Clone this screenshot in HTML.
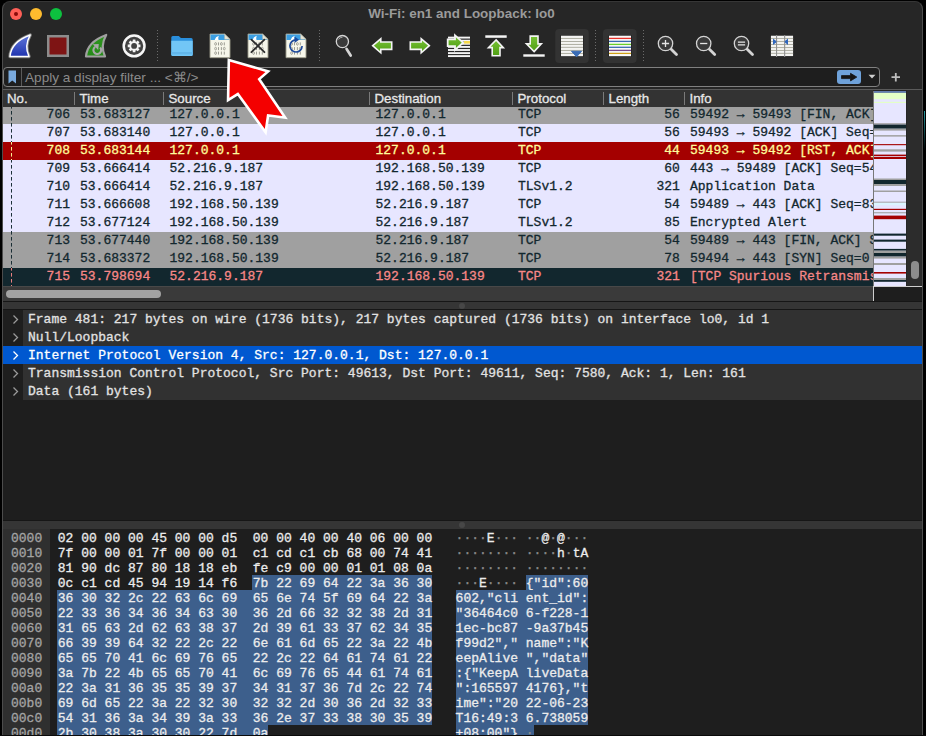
<!DOCTYPE html>
<html><head><meta charset="utf-8">
<style>
html,body{margin:0;padding:0;width:926px;height:736px;overflow:hidden;background:#000;position:relative;}
*{box-sizing:border-box;}
.a{position:absolute;}
.sans{font-family:"Liberation Sans",sans-serif;}
.mono{font-family:"Liberation Mono",monospace;}
.row{position:absolute;left:3px;width:870px;height:18px;font-family:"Liberation Mono",monospace;font-size:13px;line-height:18px;white-space:pre;overflow:hidden;-webkit-text-stroke:0.3px currentColor;}
.row span{position:absolute;top:0;}
.hdr{position:absolute;top:0;font-family:"Liberation Sans",sans-serif;font-size:13.3px;color:#e8e8e8;line-height:17px;white-space:pre;-webkit-text-stroke:0.3px currentColor;}
.hsep{position:absolute;top:92px;width:1px;height:13px;background:#7a7a7a;}
.drow{position:absolute;left:3px;width:919px;height:18px;font-family:"Liberation Mono",monospace;font-size:13px;line-height:18px;white-space:pre;color:#e2e2e2;-webkit-text-stroke:0.3px currentColor;}
.hx{position:absolute;font-family:"Liberation Mono",monospace;font-size:13px;line-height:15px;white-space:pre;color:#ececec;-webkit-text-stroke:0.3px currentColor;}
.sep{position:absolute;top:30px;width:0;height:31px;border-left:1px dotted #6a6a6a;}
</style></head><body>

<div class="a" style="left:2px;top:1px;width:921px;height:760px;background:#262626;border-radius:8px 8px 0 0;border:1px solid #4c4c4c;border-top-color:#363636;border-bottom:none;"></div>
<div class="a sans" style="left:-1.5px;top:6px;width:926px;text-align:center;font-weight:bold;font-size:13.45px;color:#9b9b9b;line-height:16px;">Wi-Fi: en1 and Loopback: lo0</div>
<div class="a" style="left:10px;top:8px;width:12px;height:12px;border-radius:50%;background:#fe5f57;"></div>
<div class="a" style="left:14px;top:12px;width:4px;height:4px;border-radius:50%;background:#8a0a0a;"></div>
<div class="a" style="left:30px;top:8px;width:12px;height:12px;border-radius:50%;background:#febc2e;"></div>
<div class="a" style="left:50px;top:8px;width:12px;height:12px;border-radius:50%;background:#0dc13f;"></div>
<svg class="a" style="left:0;top:0" width="926" height="70" viewBox="0 0 926 70"><defs><linearGradient id="gb" x1="0" y1="0" x2="0" y2="1"><stop offset="0" stop-color="#6077db"/><stop offset="1" stop-color="#1f33ae"/></linearGradient><linearGradient id="gg" x1="0" y1="0" x2="0" y2="1"><stop offset="0" stop-color="#2f951f"/><stop offset="1" stop-color="#248a18"/></linearGradient><linearGradient id="ga" x1="0" y1="0" x2="0" y2="1"><stop offset="0" stop-color="#78c235"/><stop offset="1" stop-color="#4f9e14"/></linearGradient></defs><path d="M10,56.5 Q11,42 30.2,35 Q24,46 29,56.5 Z" fill="none" stroke="#7c7c7c" stroke-width="3.4" stroke-linejoin="round"/><path d="M10,56.5 Q11,42 30.2,35 Q24,46 29,56.5 Z" fill="url(#gb)" stroke="#ffffff" stroke-width="1.5" stroke-linejoin="round"/><rect x="47" y="35" width="22" height="22" fill="#8c8c8c"/><rect x="49.5" y="37.5" width="17" height="17" fill="#7e1414"/><path d="M86,56.5 Q87,42 106.2,35 Q100,46 105,56.5 Z" fill="url(#gg)" stroke="#a0a0a0" stroke-width="2.2" stroke-linejoin="round"/><path d="M95.2,46.8 A3.9,3.9 0 1 0 100.2,47.5" fill="none" stroke="#a8a8a8" stroke-width="2.1"/><path d="M92.8,44.2 L98.8,44 L98.2,50 Z" fill="#a8a8a8"/><circle cx="134.1" cy="45.9" r="10.4" fill="#424242" stroke="#f6f6f6" stroke-width="2.5"/><path d="M140.47,44.61 L140.47,47.19 L138.69,47.32 L138.35,48.14 L139.52,49.49 L137.69,51.32 L136.34,50.15 L135.52,50.49 L135.39,52.27 L132.81,52.27 L132.68,50.49 L131.86,50.15 L130.51,51.32 L128.68,49.49 L129.85,48.14 L129.51,47.32 L127.73,47.19 L127.73,44.61 L129.51,44.48 L129.85,43.66 L128.68,42.31 L130.51,40.48 L131.86,41.65 L132.68,41.31 L132.81,39.53 L135.39,39.53 L135.52,41.31 L136.34,41.65 L137.69,40.48 L139.52,42.31 L138.35,43.66 L138.69,44.48 Z" fill="#f4f4f4"/><circle cx="134.1" cy="45.9" r="2.9" fill="#424242"/><path d="M171.3,37.4 Q171.3,35.9 172.8,35.9 L178.8,35.9 L180.9,38 L191.2,38 Q192.7,38 192.7,39.5 L192.7,54.4 Q192.7,55.9 191.2,55.9 L172.8,55.9 Q171.3,55.9 171.3,54.4 Z" fill="#2a8fdc"/><path d="M171.3,40.8 L192.7,40.8 L192.7,54.4 Q192.7,55.9 191.2,55.9 L172.8,55.9 Q171.3,55.9 171.3,54.4 Z" fill="#72c6f6"/><rect x="171.3" y="52" width="21.4" height="2.4" fill="#62b6ea"/><path d="M210,34 L224.6,34 L230,39.3 L230,57.7 L210,57.7 Z" fill="#f6f6ea" stroke="#9a9888" stroke-width="0.9"/><path d="M210.5,34.5 L224.4,34.5 L229.5,39.5 L229.5,39.9 L210.5,39.9 Z" fill="#3a9ee2"/><path d="M214.6,39.9 Q215.5,36.8 218.8,35.8 Q217.8,38 218.6,39.9 Z" fill="#ffffff"/><path d="M224.6,34.2 L224.6,39.3 L229.8,39.3 Z" fill="#e8e6d6" stroke="#b8b6a4" stroke-width="0.5"/><ellipse cx="215.60" cy="43.9" rx="0.9" ry="1.35" fill="none" stroke="#85857c" stroke-width="0.7"/><line x1="218.50" y1="42.4" x2="218.50" y2="45.4" stroke="#85857c" stroke-width="0.8"/><ellipse cx="221.40" cy="43.9" rx="0.9" ry="1.35" fill="none" stroke="#85857c" stroke-width="0.7"/><line x1="224.30" y1="42.4" x2="224.30" y2="45.4" stroke="#85857c" stroke-width="0.8"/><ellipse cx="215.60" cy="48.6" rx="0.9" ry="1.35" fill="none" stroke="#85857c" stroke-width="0.7"/><line x1="218.50" y1="47.1" x2="218.50" y2="50.1" stroke="#85857c" stroke-width="0.8"/><line x1="221.40" y1="47.1" x2="221.40" y2="50.1" stroke="#85857c" stroke-width="0.8"/><ellipse cx="224.30" cy="48.6" rx="0.9" ry="1.35" fill="none" stroke="#85857c" stroke-width="0.7"/><ellipse cx="215.60" cy="53.1" rx="0.9" ry="1.35" fill="none" stroke="#85857c" stroke-width="0.7"/><line x1="218.50" y1="51.6" x2="218.50" y2="54.6" stroke="#85857c" stroke-width="0.8"/><line x1="221.40" y1="51.6" x2="221.40" y2="54.6" stroke="#85857c" stroke-width="0.8"/><line x1="224.30" y1="51.6" x2="224.30" y2="54.6" stroke="#85857c" stroke-width="0.8"/><path d="M248,34 L262.6,34 L268,39.3 L268,57.7 L248,57.7 Z" fill="#f6f6ea" stroke="#9a9888" stroke-width="0.9"/><path d="M248.5,34.5 L262.4,34.5 L267.5,39.5 L267.5,39.9 L248.5,39.9 Z" fill="#3a9ee2"/><path d="M252.6,39.9 Q253.5,36.8 256.8,35.8 Q255.8,38 256.6,39.9 Z" fill="#ffffff"/><path d="M262.6,34.2 L262.6,39.3 L267.8,39.3 Z" fill="#e8e6d6" stroke="#b8b6a4" stroke-width="0.5"/><ellipse cx="253.60" cy="43.9" rx="0.9" ry="1.35" fill="none" stroke="#85857c" stroke-width="0.7"/><line x1="256.50" y1="42.4" x2="256.50" y2="45.4" stroke="#85857c" stroke-width="0.8"/><ellipse cx="259.40" cy="43.9" rx="0.9" ry="1.35" fill="none" stroke="#85857c" stroke-width="0.7"/><line x1="262.30" y1="42.4" x2="262.30" y2="45.4" stroke="#85857c" stroke-width="0.8"/><ellipse cx="253.60" cy="48.6" rx="0.9" ry="1.35" fill="none" stroke="#85857c" stroke-width="0.7"/><line x1="256.50" y1="47.1" x2="256.50" y2="50.1" stroke="#85857c" stroke-width="0.8"/><line x1="259.40" y1="47.1" x2="259.40" y2="50.1" stroke="#85857c" stroke-width="0.8"/><ellipse cx="262.30" cy="48.6" rx="0.9" ry="1.35" fill="none" stroke="#85857c" stroke-width="0.7"/><ellipse cx="253.60" cy="53.1" rx="0.9" ry="1.35" fill="none" stroke="#85857c" stroke-width="0.7"/><line x1="256.50" y1="51.6" x2="256.50" y2="54.6" stroke="#85857c" stroke-width="0.8"/><line x1="259.40" y1="51.6" x2="259.40" y2="54.6" stroke="#85857c" stroke-width="0.8"/><line x1="262.30" y1="51.6" x2="262.30" y2="54.6" stroke="#85857c" stroke-width="0.8"/><path d="M286,34 L300.6,34 L306,39.3 L306,57.7 L286,57.7 Z" fill="#f6f6ea" stroke="#9a9888" stroke-width="0.9"/><path d="M286.5,34.5 L300.4,34.5 L305.5,39.5 L305.5,39.9 L286.5,39.9 Z" fill="#3a9ee2"/><path d="M290.6,39.9 Q291.5,36.8 294.8,35.8 Q293.8,38 294.6,39.9 Z" fill="#ffffff"/><path d="M300.6,34.2 L300.6,39.3 L305.8,39.3 Z" fill="#e8e6d6" stroke="#b8b6a4" stroke-width="0.5"/><ellipse cx="291.60" cy="43.9" rx="0.9" ry="1.35" fill="none" stroke="#85857c" stroke-width="0.7"/><line x1="294.50" y1="42.4" x2="294.50" y2="45.4" stroke="#85857c" stroke-width="0.8"/><ellipse cx="297.40" cy="43.9" rx="0.9" ry="1.35" fill="none" stroke="#85857c" stroke-width="0.7"/><line x1="300.30" y1="42.4" x2="300.30" y2="45.4" stroke="#85857c" stroke-width="0.8"/><ellipse cx="291.60" cy="48.6" rx="0.9" ry="1.35" fill="none" stroke="#85857c" stroke-width="0.7"/><line x1="294.50" y1="47.1" x2="294.50" y2="50.1" stroke="#85857c" stroke-width="0.8"/><line x1="297.40" y1="47.1" x2="297.40" y2="50.1" stroke="#85857c" stroke-width="0.8"/><ellipse cx="300.30" cy="48.6" rx="0.9" ry="1.35" fill="none" stroke="#85857c" stroke-width="0.7"/><ellipse cx="291.60" cy="53.1" rx="0.9" ry="1.35" fill="none" stroke="#85857c" stroke-width="0.7"/><line x1="294.50" y1="51.6" x2="294.50" y2="54.6" stroke="#85857c" stroke-width="0.8"/><line x1="297.40" y1="51.6" x2="297.40" y2="54.6" stroke="#85857c" stroke-width="0.8"/><line x1="300.30" y1="51.6" x2="300.30" y2="54.6" stroke="#85857c" stroke-width="0.8"/><path d="M251.4,39.6 L264.4,52.2 M264.4,39.6 L251.4,52.2" stroke="#2c2c2c" stroke-width="1.8" stroke-linecap="round"/><path d="M296,39.8 A6.1,6.1 0 1 0 302.1,46" fill="none" stroke="#1e4a9c" stroke-width="1.7"/><path d="M294.6,36.6 L299,39.8 L294.6,43 Z" fill="#1e4a9c"/><line x1="157.5" y1="30" x2="157.5" y2="62" stroke="#6a6a6a" stroke-width="1" stroke-dasharray="1,2"/><line x1="319.5" y1="30" x2="319.5" y2="62" stroke="#6a6a6a" stroke-width="1" stroke-dasharray="1,2"/><line x1="595.5" y1="30" x2="595.5" y2="62" stroke="#6a6a6a" stroke-width="1" stroke-dasharray="1,2"/><line x1="643.5" y1="30" x2="643.5" y2="62" stroke="#6a6a6a" stroke-width="1" stroke-dasharray="1,2"/><line x1="346.6" y1="49" x2="350.7" y2="55.5" stroke="#d4d4d4" stroke-width="2.7" stroke-linecap="round"/><circle cx="342.4" cy="41.6" r="6.1" fill="#3a3a3a" stroke="#d4d4d4" stroke-width="1.3"/><path d="M338.5,39.5 A4.3,4.3 0 0 1 342.5,37.3" fill="none" stroke="#bdbdbd" stroke-width="0.8"/><path d="M372.7,45.7 L380.8,38.8 L380.8,42 L391.7,42 L391.7,49.4 L380.8,49.4 L380.8,52.8 Z" fill="url(#ga)" stroke="#f4f4f4" stroke-width="1.6" stroke-linejoin="miter"/><path d="M429.3,45.7 L421.2,38.8 L421.2,42 L410.3,42 L410.3,49.4 L421.2,49.4 L421.2,52.8 Z" fill="url(#ga)" stroke="#f4f4f4" stroke-width="1.6" stroke-linejoin="miter"/><rect x="448" y="36.65" width="22" height="1.9" fill="#f4f4f4"/><rect x="448" y="39.75" width="22" height="1.9" fill="#f4f4f4"/><rect x="448" y="42.849999999999994" width="22" height="1.9" fill="#f4f4f4"/><rect x="448" y="45.949999999999996" width="22" height="1.9" fill="#f4f4f4"/><rect x="448" y="49.05" width="22" height="1.9" fill="#f4f4f4"/><rect x="448" y="52.15" width="22" height="1.9" fill="#f4f4f4"/><rect x="448" y="55.15" width="22" height="1.9" fill="#f4f4f4"/><rect x="464" y="41" width="6" height="2.6" fill="#f6d84a"/><path d="M463,42.7 L455,35.4 L455,39.4 L447.7,39.4 L447.7,46.1 L455,46.1 L455,50 Z" fill="url(#ga)" stroke="#f4f4f4" stroke-width="1.8" stroke-linejoin="miter"/><rect x="485.3" y="35.3" width="21.4" height="2.5" fill="#f4f4f4"/><path d="M496.1,39.9 L503.3,47.6 L500,47.6 L500,55.7 L492.2,55.7 L492.2,47.6 L488.5,47.6 Z" fill="url(#ga)" stroke="#f4f4f4" stroke-width="1.6" stroke-linejoin="miter"/><rect x="523.3" y="54.3" width="21.4" height="2.4" fill="#f4f4f4"/><path d="M534.1,51.6 L541.3,43.9 L538,43.9 L538,36.1 L530.2,36.1 L530.2,43.9 L526.5,43.9 Z" fill="url(#ga)" stroke="#f4f4f4" stroke-width="1.6" stroke-linejoin="miter"/><rect x="555.2" y="29" width="33.6" height="33.9" rx="4" fill="#333333"/><rect x="560.5" y="35.2" width="23" height="21.5" fill="#1c1c1c"/><rect x="561" y="35.7" width="22" height="20.5" fill="#f4f4f2"/><rect x="561" y="37.949999999999996" width="22" height="0.9" fill="#a6a69a"/><rect x="561" y="41.05" width="22" height="0.9" fill="#a6a69a"/><rect x="561" y="43.949999999999996" width="22" height="0.9" fill="#a6a69a"/><rect x="561" y="46.849999999999994" width="22" height="0.9" fill="#a6a69a"/><rect x="561" y="49.949999999999996" width="22" height="0.9" fill="#a6a69a"/><rect x="561" y="52.949999999999996" width="22" height="0.9" fill="#a6a69a"/><path d="M571.5,51.3 L581.5,51.3 L576.6,56.8 Z" fill="#3a6cb4" stroke="#3a6cb4" stroke-width="1" stroke-linejoin="round"/><rect x="603" y="29" width="33.6" height="33.9" rx="4" fill="#333333"/><rect x="608.5" y="35.2" width="23" height="21.5" fill="#1c1c1c"/><rect x="609" y="35.7" width="22" height="20.5" fill="#fafafa"/><rect x="609" y="37.75" width="22" height="1.3" fill="#e8312a"/><rect x="609" y="40.75" width="22" height="1.3" fill="#3a6ab0"/><rect x="609" y="43.75" width="22" height="1.3" fill="#6ad02a"/><rect x="609" y="46.65" width="22" height="1.3" fill="#3a6ab0"/><rect x="609" y="49.75" width="22" height="1.3" fill="#7a4a8a"/><rect x="609" y="52.75" width="22" height="1.3" fill="#d0a018"/><line x1="671.2" y1="49.2" x2="676.5" y2="54.5" stroke="#d4d4d4" stroke-width="2.8" stroke-linecap="round"/><circle cx="665.5" cy="43.5" r="7.2" fill="#3a3a3a" stroke="#d4d4d4" stroke-width="1.3"/><path d="M661.9,43.5 L669.1,43.5 M665.5,39.9 L665.5,47.1" stroke="#e6e6e6" stroke-width="1.3"/><line x1="709.4000000000001" y1="49.2" x2="714.7" y2="54.5" stroke="#d4d4d4" stroke-width="2.8" stroke-linecap="round"/><circle cx="703.7" cy="43.5" r="7.2" fill="#3a3a3a" stroke="#d4d4d4" stroke-width="1.3"/><path d="M700.1,43.5 L707.3000000000001,43.5" stroke="#e6e6e6" stroke-width="1.3"/><line x1="747.2" y1="49.2" x2="752.5" y2="54.5" stroke="#d4d4d4" stroke-width="2.8" stroke-linecap="round"/><circle cx="741.5" cy="43.5" r="7.2" fill="#3a3a3a" stroke="#d4d4d4" stroke-width="1.3"/><path d="M737.9,42.1 L745.1,42.1 M737.9,44.9 L745.1,44.9" stroke="#e6e6e6" stroke-width="1.2"/><rect x="770.4" y="35.2" width="23.2" height="21.4" fill="#1c1c1c"/><rect x="770.9" y="35.7" width="22.2" height="20.4" fill="#f4f4f2"/><rect x="770.9" y="37.949999999999996" width="22.2" height="0.9" fill="#a6a69a"/><rect x="770.9" y="40.949999999999996" width="22.2" height="0.9" fill="#a6a69a"/><rect x="770.9" y="44.05" width="22.2" height="0.9" fill="#a6a69a"/><rect x="770.9" y="47.15" width="22.2" height="0.9" fill="#a6a69a"/><rect x="770.9" y="49.949999999999996" width="22.2" height="0.9" fill="#a6a69a"/><rect x="770.9" y="52.849999999999994" width="22.2" height="0.9" fill="#a6a69a"/><rect x="776" y="35" width="1.1" height="22" fill="#909090"/><rect x="784.1" y="35" width="1.1" height="22" fill="#909090"/><path d="M773,38.5 Q776.5,41 776.5,41.7 Q776.5,42.4 773,45 Z M788,38.5 Q784.6,41 784.6,41.7 Q784.6,42.4 788,45 Z" fill="#2f66bc"/></svg>
<div class="a" style="left:3px;top:67px;width:877px;height:20px;border:1px solid #808080;border-radius:4px;background:#1e1e1e;"></div>
<div class="a" style="left:21px;top:68px;width:1px;height:18px;background:#5a5a5a;"></div>
<svg class="a" style="left:0;top:60px" width="30" height="30"><path d="M8.5,10.5 L16,10.5 L16,23.5 L12.25,20.5 L8.5,23.5 Z" fill="#79a9dc"/></svg>
<div class="a sans" style="left:25px;top:69px;font-size:13.6px;line-height:17px;color:#8b8b8b;white-space:pre;">Apply a display filter ... &lt;⌘/&gt;</div>
<div class="a" style="left:837px;top:70px;width:24px;height:14px;background:#6fa2da;border-radius:3px;"></div>
<svg class="a" style="left:830px;top:60px" width="96" height="30"><path d="M11.5,15.6 L20.5,15.6 L20.5,13.3 L26.8,17.1 L20.5,20.9 L20.5,18.6 L11.5,18.6 Z" fill="#151515" stroke="#151515" stroke-width="0.8" stroke-linejoin="round"/><path d="M38.5,14.8 L45.5,14.8 L42,18.6 Z" fill="#cfcfcf"/><path d="M65.8,13 L65.8,21.5 M61.5,17.2 L70,17.2" stroke="#bdbdbd" stroke-width="1.8"/></svg>
<div class="a" style="left:3px;top:89px;width:919px;height:1px;background:#5a5a5a;"></div>
<div class="a" style="left:3px;top:90px;width:870px;height:17px;background:#333333;"></div>
<div class="hdr" style="left:7px;top:90px;">No.</div>
<div class="hdr" style="left:79.5px;top:90px;">Time</div>
<div class="hdr" style="left:168.5px;top:90px;">Source</div>
<div class="hdr" style="left:374.5px;top:90px;">Destination</div>
<div class="hdr" style="left:517.5px;top:90px;">Protocol</div>
<div class="hdr" style="left:608.5px;top:90px;">Length</div>
<div class="hdr" style="left:689.5px;top:90px;">Info</div>
<div class="hsep" style="left:74px;"></div>
<div class="hsep" style="left:163px;"></div>
<div class="hsep" style="left:369px;"></div>
<div class="hsep" style="left:512px;"></div>
<div class="hsep" style="left:603px;"></div>
<div class="hsep" style="left:684px;"></div>
<div class="a" style="left:3px;top:107px;width:870px;height:179px;overflow:hidden;">
<div class="row" style="left:0;top:-1px;background:#a0a0a0;color:#12272e;">
<span style="left:43.6px;width:23.4px;text-align:right;">706</span>
<span style="left:77px;">53.683127</span>
<span style="left:166.5px;">127.0.0.1</span>
<span style="left:372.5px;">127.0.0.1</span>
<span style="left:515px;">TCP</span>
<span style="left:661.2px;">56</span>
<span style="left:687px;">59492 → 59493 [FIN, ACK] Seq=1 Ack=1 Win=6371</span>
<svg class="a" style="left:8px;top:0" width="1" height="18"><line x1="0.5" y1="-1" x2="0.5" y2="18" stroke="#12272e" stroke-opacity="0.95" stroke-dasharray="3.6,2.4"/></svg>
</div>
<div class="row" style="left:0;top:17px;background:#e7e6ff;color:#12272e;">
<span style="left:43.6px;width:23.4px;text-align:right;">707</span>
<span style="left:77px;">53.683140</span>
<span style="left:166.5px;">127.0.0.1</span>
<span style="left:372.5px;">127.0.0.1</span>
<span style="left:515px;">TCP</span>
<span style="left:661.2px;">56</span>
<span style="left:687px;">59493 → 59492 [ACK] Seq=1 Ack=2 Win=6371</span>
<svg class="a" style="left:8px;top:0" width="1" height="18"><line x1="0.5" y1="-1" x2="0.5" y2="18" stroke="#12272e" stroke-opacity="0.95" stroke-dasharray="3.6,2.4"/></svg>
</div>
<div class="row" style="left:0;top:35px;background:#a40000;color:#fffc9c;">
<span style="left:43.6px;width:23.4px;text-align:right;">708</span>
<span style="left:77px;">53.683144</span>
<span style="left:166.5px;">127.0.0.1</span>
<span style="left:372.5px;">127.0.0.1</span>
<span style="left:515px;">TCP</span>
<span style="left:661.2px;">44</span>
<span style="left:687px;">59493 → 59492 [RST, ACK] Seq=1 Ack=2</span>
<svg class="a" style="left:8px;top:0" width="1" height="18"><line x1="0.5" y1="-1" x2="0.5" y2="18" stroke="#fffc9c" stroke-opacity="0.95" stroke-dasharray="3.6,2.4"/></svg>
</div>
<div class="row" style="left:0;top:53px;background:#e7e6ff;color:#12272e;">
<span style="left:43.6px;width:23.4px;text-align:right;">709</span>
<span style="left:77px;">53.666414</span>
<span style="left:166.5px;">52.216.9.187</span>
<span style="left:372.5px;">192.168.50.139</span>
<span style="left:515px;">TCP</span>
<span style="left:661.2px;">60</span>
<span style="left:687px;">443 → 59489 [ACK] Seq=5432 Ack=8</span>
<svg class="a" style="left:8px;top:0" width="1" height="18"><line x1="0.5" y1="-1" x2="0.5" y2="18" stroke="#12272e" stroke-opacity="0.95" stroke-dasharray="3.6,2.4"/></svg>
</div>
<div class="row" style="left:0;top:71px;background:#e7e6ff;color:#12272e;">
<span style="left:43.6px;width:23.4px;text-align:right;">710</span>
<span style="left:77px;">53.666414</span>
<span style="left:166.5px;">52.216.9.187</span>
<span style="left:372.5px;">192.168.50.139</span>
<span style="left:515px;">TLSv1.2</span>
<span style="left:653.4px;">321</span>
<span style="left:687px;">Application Data</span>
<svg class="a" style="left:8px;top:0" width="1" height="18"><line x1="0.5" y1="-1" x2="0.5" y2="18" stroke="#12272e" stroke-opacity="0.95" stroke-dasharray="3.6,2.4"/></svg>
</div>
<div class="row" style="left:0;top:89px;background:#e7e6ff;color:#12272e;">
<span style="left:43.6px;width:23.4px;text-align:right;">711</span>
<span style="left:77px;">53.666608</span>
<span style="left:166.5px;">192.168.50.139</span>
<span style="left:372.5px;">52.216.9.187</span>
<span style="left:515px;">TCP</span>
<span style="left:661.2px;">54</span>
<span style="left:687px;">59489 → 443 [ACK] Seq=83 Ack=6</span>
<svg class="a" style="left:8px;top:0" width="1" height="18"><line x1="0.5" y1="-1" x2="0.5" y2="18" stroke="#12272e" stroke-opacity="0.95" stroke-dasharray="3.6,2.4"/></svg>
</div>
<div class="row" style="left:0;top:107px;background:#e7e6ff;color:#12272e;">
<span style="left:43.6px;width:23.4px;text-align:right;">712</span>
<span style="left:77px;">53.677124</span>
<span style="left:166.5px;">192.168.50.139</span>
<span style="left:372.5px;">52.216.9.187</span>
<span style="left:515px;">TLSv1.2</span>
<span style="left:661.2px;">85</span>
<span style="left:687px;">Encrypted Alert</span>
<svg class="a" style="left:8px;top:0" width="1" height="18"><line x1="0.5" y1="-1" x2="0.5" y2="18" stroke="#12272e" stroke-opacity="0.95" stroke-dasharray="3.6,2.4"/></svg>
</div>
<div class="row" style="left:0;top:125px;background:#a0a0a0;color:#12272e;">
<span style="left:43.6px;width:23.4px;text-align:right;">713</span>
<span style="left:77px;">53.677440</span>
<span style="left:166.5px;">192.168.50.139</span>
<span style="left:372.5px;">52.216.9.187</span>
<span style="left:515px;">TCP</span>
<span style="left:661.2px;">54</span>
<span style="left:687px;">59489 → 443 [FIN, ACK] Seq=114 Ack=6</span>
<svg class="a" style="left:8px;top:0" width="1" height="18"><line x1="0.5" y1="-1" x2="0.5" y2="18" stroke="#12272e" stroke-opacity="0.95" stroke-dasharray="3.6,2.4"/></svg>
</div>
<div class="row" style="left:0;top:143px;background:#a0a0a0;color:#12272e;">
<span style="left:43.6px;width:23.4px;text-align:right;">714</span>
<span style="left:77px;">53.683372</span>
<span style="left:166.5px;">192.168.50.139</span>
<span style="left:372.5px;">52.216.9.187</span>
<span style="left:515px;">TCP</span>
<span style="left:661.2px;">78</span>
<span style="left:687px;">59494 → 443 [SYN] Seq=0 Win=65535</span>
<svg class="a" style="left:8px;top:0" width="1" height="18"><line x1="0.5" y1="-1" x2="0.5" y2="18" stroke="#12272e" stroke-opacity="0.95" stroke-dasharray="3.6,2.4"/></svg>
</div>
<div class="row" style="left:0;top:161px;background:#12272e;color:#f78787;">
<span style="left:43.6px;width:23.4px;text-align:right;">715</span>
<span style="left:77px;">53.798694</span>
<span style="left:166.5px;">52.216.9.187</span>
<span style="left:372.5px;">192.168.50.139</span>
<span style="left:515px;">TCP</span>
<span style="left:653.4px;">321</span>
<span style="left:687px;">[TCP Spurious Retransmission]</span>
<svg class="a" style="left:8px;top:0" width="1" height="18"><line x1="0.5" y1="-1" x2="0.5" y2="18" stroke="#f78787" stroke-opacity="0.95" stroke-dasharray="3.6,2.4"/></svg>
</div>
</div>
<div class="a" style="left:873px;top:91px;width:33px;height:195px;background:#e7e6ff;border-left:1px solid #777;"></div>
<svg class="a" style="left:874px;top:91px" width="32" height="195"><rect x="0" y="0.3" width="33" height="1.5" fill="#2c4f8c"/><rect x="0" y="1.8" width="33" height="6.4" fill="#e4ffc7"/><rect x="0" y="10.8" width="33" height="1.2" fill="#e4ffc7"/><rect x="0" y="32.2" width="33" height="1.4" fill="#a0a0a0"/><rect x="0" y="33.6" width="33" height="4.1" fill="#12272e"/><rect x="0" y="37.7" width="33" height="1.9" fill="#a0a0a0"/><rect x="0" y="44.1" width="33" height="1.5" fill="#a0a0a0"/><rect x="0" y="53.1" width="33" height="1.1" fill="#a40000"/><rect x="0" y="58.3" width="33" height="2.3" fill="#a0a0a0"/><rect x="0" y="63.6" width="33" height="1.4" fill="#a40000"/><rect x="0" y="65.8" width="33" height="2.2" fill="#a40000"/><rect x="0" y="87.5" width="33" height="1.5" fill="#a0a0a0"/><rect x="0" y="89.0" width="33" height="4.0" fill="#12272e"/><rect x="0" y="93.0" width="33" height="2.0" fill="#a0a0a0"/><rect x="0" y="99.5" width="33" height="1.5" fill="#a0a0a0"/><rect x="0" y="110.7" width="33" height="1.1" fill="#a0a0a0"/><rect x="0" y="111.8" width="33" height="2.4" fill="#daf5ff"/><rect x="0" y="117.8" width="33" height="1.2" fill="#a40000"/><rect x="0" y="121.2" width="33" height="1.1" fill="#a0a0a0"/><rect x="0" y="124.6" width="33" height="3.6" fill="#a40000"/><rect x="0" y="142.6" width="33" height="2.1" fill="#12272e"/><rect x="0" y="148.6" width="33" height="2.1" fill="#12272e"/><rect x="0" y="157.9" width="33" height="1.8" fill="#12272e"/><rect x="0" y="159.7" width="33" height="2.3" fill="#a0a0a0"/><rect x="0" y="162.0" width="33" height="3.6" fill="#12272e"/><rect x="0" y="165.6" width="33" height="2.0" fill="#a0a0a0"/><rect x="0" y="172.0" width="33" height="2.0" fill="#a0a0a0"/><rect x="0" y="181.0" width="33" height="1.6" fill="#a40000"/><rect x="0" y="187.0" width="33" height="2.0" fill="#a0a0a0"/><rect x="0" y="189.0" width="33" height="1.8" fill="#12272e"/></svg>
<div class="a" style="left:907px;top:90px;width:15px;height:196px;background:#2c2c2c;"></div>
<div class="a" style="left:911px;top:261px;width:8px;height:18px;background:#8c8c8c;border-radius:4px;"></div>
<div class="a" style="left:3px;top:286px;width:870px;height:15px;background:#3a3a3a;border-top:1px solid #484848;"></div>
<div class="a" style="left:6px;top:290px;width:155px;height:8px;background:#a2a2a2;border-radius:4px;"></div>
<div class="a" style="left:873px;top:286px;width:49px;height:15px;background:#1e1e1e;border-left:1px solid #cfcfcf;border-top:1px solid #cfcfcf;"></div>
<div class="a" style="left:3px;top:301px;width:919px;height:9px;background:#353535;border-top:1px solid #161616;border-bottom:1px solid #161616;"></div>
<div class="a" style="left:459px;top:302.5px;width:6px;height:6px;border-radius:50%;background:#474747;"></div>
<div class="a" style="left:3px;top:310px;width:919px;height:211px;background:#1e1e1e;"></div>
<div class="a" style="left:23px;top:310px;width:899px;height:18px;background:#313131;"></div>
<div class="drow" style="left:28px;top:311px;color:#e2e2e2;">Frame 481: 217 bytes on wire (1736 bits), 217 bytes captured (1736 bits) on interface lo0, id 1</div>
<svg class="a" style="left:10px;top:310px" width="12" height="18"><path d="M3.5,5.5 L7.5,9.5 L3.5,13.5" fill="none" stroke="#9a9a9a" stroke-width="1.3"/></svg>
<div class="a" style="left:23px;top:328px;width:899px;height:18px;background:#313131;"></div>
<div class="drow" style="left:28px;top:329px;color:#e2e2e2;">Null/Loopback</div>
<svg class="a" style="left:10px;top:328px" width="12" height="18"><path d="M3.5,5.5 L7.5,9.5 L3.5,13.5" fill="none" stroke="#9a9a9a" stroke-width="1.3"/></svg>
<div class="a" style="left:3px;top:346px;width:919px;height:18px;background:#0058d0;"></div>
<div class="drow" style="left:28px;top:347px;color:#ffffff;">Internet Protocol Version 4, Src: 127.0.0.1, Dst: 127.0.0.1</div>
<svg class="a" style="left:10px;top:346px" width="12" height="18"><path d="M3.5,5.5 L7.5,9.5 L3.5,13.5" fill="none" stroke="#ffffff" stroke-width="1.3"/></svg>
<div class="a" style="left:23px;top:364px;width:899px;height:18px;background:#313131;"></div>
<div class="drow" style="left:28px;top:365px;color:#e2e2e2;">Transmission Control Protocol, Src Port: 49613, Dst Port: 49611, Seq: 7580, Ack: 1, Len: 161</div>
<svg class="a" style="left:10px;top:364px" width="12" height="18"><path d="M3.5,5.5 L7.5,9.5 L3.5,13.5" fill="none" stroke="#9a9a9a" stroke-width="1.3"/></svg>
<div class="a" style="left:23px;top:382px;width:899px;height:18px;background:#313131;"></div>
<div class="drow" style="left:28px;top:383px;color:#e2e2e2;">Data (161 bytes)</div>
<svg class="a" style="left:10px;top:382px" width="12" height="18"><path d="M3.5,5.5 L7.5,9.5 L3.5,13.5" fill="none" stroke="#9a9a9a" stroke-width="1.3"/></svg>
<div class="a" style="left:3px;top:520px;width:919px;height:9px;background:#353535;border-top:1px solid #161616;"></div>
<div class="a" style="left:459px;top:521.5px;width:6px;height:6px;border-radius:50%;background:#474747;"></div>
<div class="a" style="left:3px;top:529px;width:919px;height:210px;background:#1e1e1e;"></div>
<div class="a" style="left:3px;top:529px;width:47px;height:210px;background:#2f2f2f;"></div>
<div class="hx" style="left:11.0px;top:531px;color:#a4a4a4;">0000</div>
<div class="hx" style="left:57.8px;top:531px;">02 00 00 00 45 00 00 d5</div>
<div class="hx" style="left:252.8px;top:531px;">00 00 40 00 40 06 00 00</div>
<div class="hx" style="left:455.6px;top:531px;"><span style="color:#8a8a8a">·</span><span style="color:#8a8a8a">·</span><span style="color:#8a8a8a">·</span><span style="color:#8a8a8a">·</span>E<span style="color:#8a8a8a">·</span><span style="color:#8a8a8a">·</span><span style="color:#8a8a8a">·</span></div>
<div class="hx" style="left:525.8px;top:531px;"><span style="color:#8a8a8a">·</span><span style="color:#8a8a8a">·</span>@<span style="color:#8a8a8a">·</span>@<span style="color:#8a8a8a">·</span><span style="color:#8a8a8a">·</span><span style="color:#8a8a8a">·</span></div>
<div class="hx" style="left:11.0px;top:546px;color:#a4a4a4;">0010</div>
<div class="hx" style="left:57.8px;top:546px;">7f 00 00 01 7f 00 00 01</div>
<div class="hx" style="left:252.8px;top:546px;">c1 cd c1 cb 68 00 74 41</div>
<div class="hx" style="left:455.6px;top:546px;"><span style="color:#8a8a8a">·</span><span style="color:#8a8a8a">·</span><span style="color:#8a8a8a">·</span><span style="color:#8a8a8a">·</span><span style="color:#8a8a8a">·</span><span style="color:#8a8a8a">·</span><span style="color:#8a8a8a">·</span><span style="color:#8a8a8a">·</span></div>
<div class="hx" style="left:525.8px;top:546px;"><span style="color:#8a8a8a">·</span><span style="color:#8a8a8a">·</span><span style="color:#8a8a8a">·</span><span style="color:#8a8a8a">·</span>h<span style="color:#8a8a8a">·</span>tA</div>
<div class="hx" style="left:11.0px;top:561px;color:#a4a4a4;">0020</div>
<div class="hx" style="left:57.8px;top:561px;">81 90 dc 87 80 18 18 eb</div>
<div class="hx" style="left:252.8px;top:561px;">fe c9 00 00 01 01 08 0a</div>
<div class="hx" style="left:455.6px;top:561px;"><span style="color:#8a8a8a">·</span><span style="color:#8a8a8a">·</span><span style="color:#8a8a8a">·</span><span style="color:#8a8a8a">·</span><span style="color:#8a8a8a">·</span><span style="color:#8a8a8a">·</span><span style="color:#8a8a8a">·</span><span style="color:#8a8a8a">·</span></div>
<div class="hx" style="left:525.8px;top:561px;"><span style="color:#8a8a8a">·</span><span style="color:#8a8a8a">·</span><span style="color:#8a8a8a">·</span><span style="color:#8a8a8a">·</span><span style="color:#8a8a8a">·</span><span style="color:#8a8a8a">·</span><span style="color:#8a8a8a">·</span><span style="color:#8a8a8a">·</span></div>
<div class="a" style="left:252.3px;top:575px;width:179.9px;height:15px;background:#3d5f8c;"></div>
<div class="a" style="left:525.8px;top:575px;width:62.4px;height:15px;background:#3d5f8c;"></div>
<div class="hx" style="left:11.0px;top:576px;color:#a4a4a4;">0030</div>
<div class="hx" style="left:57.8px;top:576px;">0c c1 cd 45 94 19 14 f6</div>
<div class="hx" style="left:252.8px;top:576px;">7b 22 69 64 22 3a 36 30</div>
<div class="hx" style="left:455.6px;top:576px;"><span style="color:#8a8a8a">·</span><span style="color:#8a8a8a">·</span><span style="color:#8a8a8a">·</span>E<span style="color:#8a8a8a">·</span><span style="color:#8a8a8a">·</span><span style="color:#8a8a8a">·</span><span style="color:#8a8a8a">·</span></div>
<div class="hx" style="left:525.8px;top:576px;">{&quot;id&quot;:60</div>
<div class="a" style="left:57.3px;top:590px;width:374.9px;height:15px;background:#3d5f8c;"></div>
<div class="a" style="left:455.6px;top:590px;width:132.6px;height:15px;background:#3d5f8c;"></div>
<div class="hx" style="left:11.0px;top:591px;color:#a4a4a4;">0040</div>
<div class="hx" style="left:57.8px;top:591px;">36 30 32 2c 22 63 6c 69</div>
<div class="hx" style="left:252.8px;top:591px;">65 6e 74 5f 69 64 22 3a</div>
<div class="hx" style="left:455.6px;top:591px;">602,&quot;cli</div>
<div class="hx" style="left:525.8px;top:591px;">ent_id&quot;:</div>
<div class="a" style="left:57.3px;top:605px;width:374.9px;height:15px;background:#3d5f8c;"></div>
<div class="a" style="left:455.6px;top:605px;width:132.6px;height:15px;background:#3d5f8c;"></div>
<div class="hx" style="left:11.0px;top:606px;color:#a4a4a4;">0050</div>
<div class="hx" style="left:57.8px;top:606px;">22 33 36 34 36 34 63 30</div>
<div class="hx" style="left:252.8px;top:606px;">36 2d 66 32 32 38 2d 31</div>
<div class="hx" style="left:455.6px;top:606px;">&quot;36464c0</div>
<div class="hx" style="left:525.8px;top:606px;">6-f228-1</div>
<div class="a" style="left:57.3px;top:620px;width:374.9px;height:15px;background:#3d5f8c;"></div>
<div class="a" style="left:455.6px;top:620px;width:132.6px;height:15px;background:#3d5f8c;"></div>
<div class="hx" style="left:11.0px;top:621px;color:#a4a4a4;">0060</div>
<div class="hx" style="left:57.8px;top:621px;">31 65 63 2d 62 63 38 37</div>
<div class="hx" style="left:252.8px;top:621px;">2d 39 61 33 37 62 34 35</div>
<div class="hx" style="left:455.6px;top:621px;">1ec-bc87</div>
<div class="hx" style="left:525.8px;top:621px;">-9a37b45</div>
<div class="a" style="left:57.3px;top:635px;width:374.9px;height:15px;background:#3d5f8c;"></div>
<div class="a" style="left:455.6px;top:635px;width:132.6px;height:15px;background:#3d5f8c;"></div>
<div class="hx" style="left:11.0px;top:636px;color:#a4a4a4;">0070</div>
<div class="hx" style="left:57.8px;top:636px;">66 39 39 64 32 22 2c 22</div>
<div class="hx" style="left:252.8px;top:636px;">6e 61 6d 65 22 3a 22 4b</div>
<div class="hx" style="left:455.6px;top:636px;">f99d2&quot;,&quot;</div>
<div class="hx" style="left:525.8px;top:636px;">name&quot;:&quot;K</div>
<div class="a" style="left:57.3px;top:650px;width:374.9px;height:15px;background:#3d5f8c;"></div>
<div class="a" style="left:455.6px;top:650px;width:132.6px;height:15px;background:#3d5f8c;"></div>
<div class="hx" style="left:11.0px;top:651px;color:#a4a4a4;">0080</div>
<div class="hx" style="left:57.8px;top:651px;">65 65 70 41 6c 69 76 65</div>
<div class="hx" style="left:252.8px;top:651px;">22 2c 22 64 61 74 61 22</div>
<div class="hx" style="left:455.6px;top:651px;">eepAlive</div>
<div class="hx" style="left:525.8px;top:651px;">&quot;,&quot;data&quot;</div>
<div class="a" style="left:57.3px;top:665px;width:374.9px;height:15px;background:#3d5f8c;"></div>
<div class="a" style="left:455.6px;top:665px;width:132.6px;height:15px;background:#3d5f8c;"></div>
<div class="hx" style="left:11.0px;top:666px;color:#a4a4a4;">0090</div>
<div class="hx" style="left:57.8px;top:666px;">3a 7b 22 4b 65 65 70 41</div>
<div class="hx" style="left:252.8px;top:666px;">6c 69 76 65 44 61 74 61</div>
<div class="hx" style="left:455.6px;top:666px;">:{&quot;KeepA</div>
<div class="hx" style="left:525.8px;top:666px;">liveData</div>
<div class="a" style="left:57.3px;top:680px;width:374.9px;height:15px;background:#3d5f8c;"></div>
<div class="a" style="left:455.6px;top:680px;width:132.6px;height:15px;background:#3d5f8c;"></div>
<div class="hx" style="left:11.0px;top:681px;color:#a4a4a4;">00a0</div>
<div class="hx" style="left:57.8px;top:681px;">22 3a 31 36 35 35 39 37</div>
<div class="hx" style="left:252.8px;top:681px;">34 31 37 36 7d 2c 22 74</div>
<div class="hx" style="left:455.6px;top:681px;">&quot;:165597</div>
<div class="hx" style="left:525.8px;top:681px;">4176},&quot;t</div>
<div class="a" style="left:57.3px;top:695px;width:374.9px;height:15px;background:#3d5f8c;"></div>
<div class="a" style="left:455.6px;top:695px;width:132.6px;height:15px;background:#3d5f8c;"></div>
<div class="hx" style="left:11.0px;top:696px;color:#a4a4a4;">00b0</div>
<div class="hx" style="left:57.8px;top:696px;">69 6d 65 22 3a 22 32 30</div>
<div class="hx" style="left:252.8px;top:696px;">32 32 2d 30 36 2d 32 33</div>
<div class="hx" style="left:455.6px;top:696px;">ime&quot;:&quot;20</div>
<div class="hx" style="left:525.8px;top:696px;">22-06-23</div>
<div class="a" style="left:57.3px;top:710px;width:374.9px;height:15px;background:#3d5f8c;"></div>
<div class="a" style="left:455.6px;top:710px;width:132.6px;height:15px;background:#3d5f8c;"></div>
<div class="hx" style="left:11.0px;top:711px;color:#a4a4a4;">00c0</div>
<div class="hx" style="left:57.8px;top:711px;">54 31 36 3a 34 39 3a 33</div>
<div class="hx" style="left:252.8px;top:711px;">36 2e 37 33 38 30 35 39</div>
<div class="hx" style="left:455.6px;top:711px;">T16:49:3</div>
<div class="hx" style="left:525.8px;top:711px;">6.738059</div>
<div class="a" style="left:57.3px;top:725px;width:211.1px;height:15px;background:#3d5f8c;"></div>
<div class="a" style="left:455.6px;top:725px;width:78.0px;height:15px;background:#3d5f8c;"></div>
<div class="hx" style="left:11.0px;top:726px;color:#a4a4a4;">00d0</div>
<div class="hx" style="left:57.8px;top:726px;">2b 30 38 3a 30 30 22 7d</div>
<div class="hx" style="left:252.8px;top:726px;">0a</div>
<div class="hx" style="left:455.6px;top:726px;">+08:00&quot;}</div>
<div class="hx" style="left:525.8px;top:726px;"><span style="color:#8a8a8a">·</span></div>
<div class="a" style="left:0;top:735px;width:926px;height:1px;background:#0a0a0a;"></div>
<div class="a" style="left:924px;top:111px;width:1px;height:40px;background:linear-gradient(#2a9aa0,#0c3a3c 60%,#000);"></div>
<svg class="a" style="left:0;top:0" width="926" height="736"><path d="M230.1,61.7 L265.5,71.9 L257.5,78.9 L282.5,116 L267,114 L264.8,129 L238.2,92.3 L229.4,97.7 Z" fill="#f40000" stroke="#ffffff" stroke-width="5.2" stroke-linejoin="miter" stroke-miterlimit="3" paint-order="stroke"/></svg>
</body></html>
